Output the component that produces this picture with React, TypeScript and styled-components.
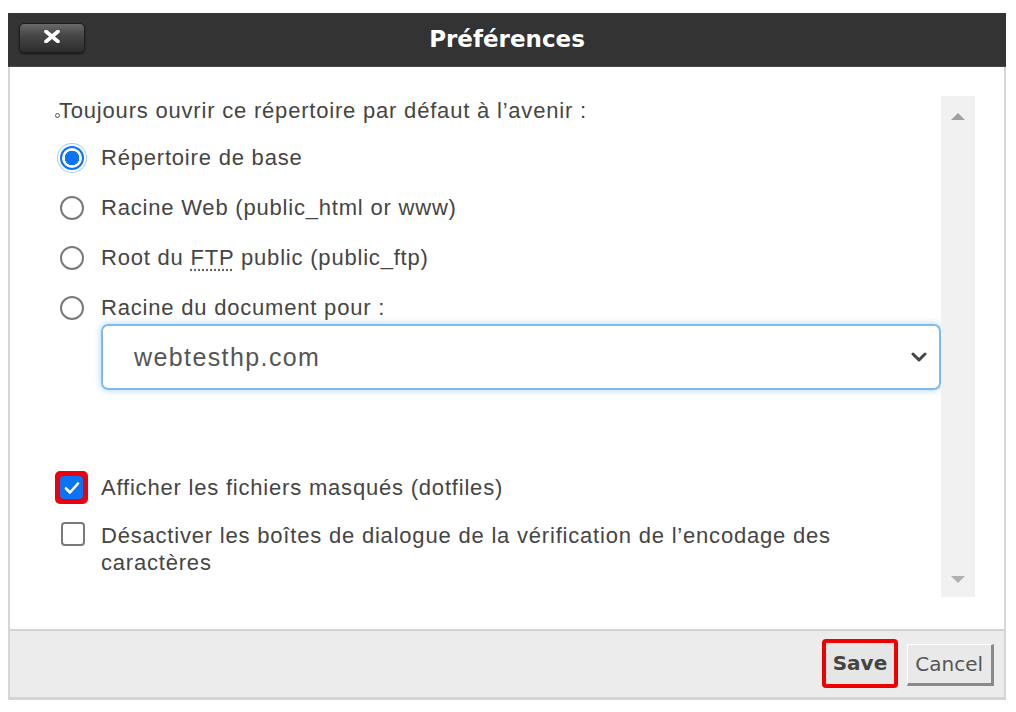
import React, { FC } from "react";
import styled, { createGlobalStyle, css } from "styled-components";

const GlobalStyle = createGlobalStyle`
  body {
    margin: 0;
    background: #fff;
    font-family: "Liberation Sans", Arial, sans-serif;
  }
`;

interface IOption {
  id: string;
  label: React.ReactNode;
  checked?: boolean;
}

const App: FC = () => {
  const folders: IOption[] = [
    { id: "home", label: "Répertoire de base", checked: true },
    { id: "web", label: "Racine Web (public_html or www)" },
    {
      id: "ftp",
      label: (
        <>
          Root du <Abbr title="File Transfer Protocol">FTP</Abbr> public (public_ftp)
        </>
      )
    },
    { id: "docroot", label: "Racine du document pour :" }
  ];

  return (
    <Page>
      <GlobalStyle />
      <Dialog>
        <Header>
          <CloseButton aria-label="close">
            <svg width="18" height="13" viewBox="0 0 18 13">
              <path d="M3 1.5 L15 11.5 M15 1.5 L3 11.5" stroke="#fff" strokeWidth="3.6" strokeLinecap="round" />
            </svg>
          </CloseButton>
          <Title>Préférences</Title>
          <span />
        </Header>
        <Body>
          <Content>
            <Heading>
              <Dot />
              Toujours ouvrir ce répertoire par défaut à l’avenir :
            </Heading>
            <RadioList>
              {folders.map(f => (
                <Row key={f.id}>
                  <Radio $checked={f.checked} />
                  <Label>{f.label}</Label>
                </Row>
              ))}
            </RadioList>
            <Select>
              <span>webtesthp.com</span>
              <svg width="16" height="10" viewBox="0 0 16 10">
                <path d="M2 2 L8 8 L14 2" fill="none" stroke="#444" strokeWidth="3" strokeLinecap="round" strokeLinejoin="round" />
              </svg>
            </Select>
            <CheckList>
              <Row>
                <Highlight>
                  <Checkbox $checked>
                    <svg width="16" height="14" viewBox="0 0 16 14">
                      <path d="M2 7.5 L6 11.5 L14 2.5" fill="none" stroke="#fff" strokeWidth="2.6" strokeLinecap="round" strokeLinejoin="round" />
                    </svg>
                  </Checkbox>
                </Highlight>
                <Label>Afficher les fichiers masqués (dotfiles)</Label>
              </Row>
              <Row $top>
                <Checkbox />
                <Label $wrap>
                  Désactiver les boîtes de dialogue de la vérification de l’encodage des caractères
                </Label>
              </Row>
            </CheckList>
          </Content>
          <ScrollRail>
            <Arrow />
            <Arrow $down />
          </ScrollRail>
        </Body>
        <Footer>
          <SaveFrame>
            <Button $primary>Save</Button>
          </SaveFrame>
          <Button>Cancel</Button>
        </Footer>
      </Dialog>
    </Page>
  );
};

const Page = styled.div`
  padding: 13px 10px 0 8px;
`;

const Dialog = styled.div`
  width: 998px;
`;

const Header = styled.div`
  height: 53px;
  background: #333;
  border-bottom: 1px solid #4a4a4a;
  display: grid;
  grid-template-columns: 1fr auto 1fr;
  align-items: center;
`;

const CloseButton = styled.button`
  justify-self: start;
  margin: -4px 0 0 11px;
  width: 66px;
  height: 30px;
  border: 1px solid #1e1e1e;
  border-radius: 5px;
  background: linear-gradient(#6a6a6a 0%, #4a4a4a 35%, #2c2c2c 100%);
  box-shadow: 0 1px 2px rgba(0, 0, 0, 0.6);
  display: flex;
  align-items: center;
  justify-content: center;
  padding: 0 0 2px;
`;

const Title = styled.div`
  color: #fff;
  font-family: "DejaVu Sans", sans-serif;
  font-weight: bold;
  font-size: 23px;
  margin-top: -1px;
`;

const Body = styled.div`
  height: 562px;
  display: flex;
  border-left: 2px solid #d6d6d6;
  border-right: 2px solid #d6d6d6;
  padding-right: 29px;
  box-sizing: border-box;
`;

const Content = styled.div`
  flex: 1;
  padding: 31px 0 0 45px;
  color: #454545;
  font-size: 22px;
  letter-spacing: 0.8px;
  line-height: 26px;
`;

const Heading = styled.div`
  display: flex;
  align-items: center;
`;

const Dot = styled.span`
  width: 3px;
  height: 3px;
  border: 1.5px solid #555;
  border-radius: 50%;
  margin: 8px -1px 0 0;
`;

const RadioList = styled.div`
  display: flex;
  flex-direction: column;
  gap: 24px;
  margin-top: 21px;
`;

const CheckList = styled.div`
  display: flex;
  flex-direction: column;
  gap: 18px;
  margin-top: 81px;
`;

const Row = styled.div<{ $top?: boolean }>`
  display: flex;
  align-items: ${p => (p.$top ? "flex-start" : "center")};
`;

const Label = styled.span<{ $wrap?: boolean }>`
  margin-left: 17px;
  ${p =>
    p.$wrap &&
    css`
      margin-left: 16px;
      max-width: 760px;
      line-height: 27px;
    `}
`;

const Abbr = styled.abbr`
  text-decoration: underline dotted #666;
  text-underline-offset: 4px;
`;

const Radio = styled.span<{ $checked?: boolean }>`
  width: 24px;
  height: 24px;
  margin-left: 5px;
  box-sizing: border-box;
  border-radius: 50%;
  flex-shrink: 0;
  border: 2px solid #7a7a7a;
  ${p =>
    p.$checked &&
    css`
      border-color: #0a74f5;
      background: radial-gradient(circle, #0a74f5 0 7px, #fff 7.5px);
      box-shadow: 0 0 0 2px #fff, 0 0 0 3px rgba(100, 170, 240, 0.6);
    `}
`;

const Select = styled.div`
  margin: 3px 0 0 46px;
  height: 66px;
  box-sizing: border-box;
  border: 2px solid #7fbaea;
  border-radius: 7px;
  box-shadow: 0 0 7px rgba(102, 175, 233, 0.55);
  display: flex;
  align-items: center;
  justify-content: space-between;
  padding: 0 12px 0 31px;
  font-size: 25px;
  letter-spacing: 1.4px;
  color: #555;
`;

const Highlight = styled.span`
  display: flex;
  margin: 0 -4px 0 0;
  padding: 2px;
  border: 3px solid #ea0010;
  border-radius: 5px;
  background: #ea0010;
`;

const Checkbox = styled.span<{ $checked?: boolean }>`
  width: 24px;
  height: 24px;
  box-sizing: border-box;
  flex-shrink: 0;
  margin-left: 6px;
  border-radius: 4px;
  border: 2px solid #7a7a7a;
  display: flex;
  align-items: center;
  justify-content: center;
  ${p =>
    p.$checked &&
    css`
      margin-left: 0;
      width: 23px;
      height: 23px;
      border: none;
      background: #0a74f5;
    `}
`;

const ScrollRail = styled.div`
  width: 34px;
  height: 501px;
  margin-top: 29px;
  background: #f1f1f1;
  display: flex;
  flex-direction: column;
  justify-content: space-between;
  align-items: center;
  padding: 17px 0 14px;
  box-sizing: border-box;
`;

const Arrow = styled.span<{ $down?: boolean }>`
  width: 0;
  height: 0;
  border-left: 7px solid transparent;
  border-right: 7px solid transparent;
  ${p =>
    p.$down
      ? css`
          border-top: 7px solid #b0b0b0;
        `
      : css`
          border-bottom: 7px solid #a0a0a0;
        `}
`;

const Footer = styled.div`
  height: 66px;
  background: #ececec;
  border: 2px solid #d6d6d6;
  border-top-color: #d3d3d3;
  border-bottom-width: 3px;
  display: flex;
  justify-content: flex-end;
  align-items: center;
  gap: 9px;
  padding-right: 10px;
`;

const SaveFrame = styled.div`
  display: flex;
  border: 4px solid #ee0000;
  border-radius: 4px;
  margin-top: -2px;
`;

const Button = styled.button<{ $primary?: boolean }>`
  font-family: "DejaVu Sans", Verdana, sans-serif;
  font-size: 20px;
  height: 42px;
  padding: 0 8px 0 7px;
  background: #e9e9e9;
  color: #555;
  border-style: solid;
  border-width: 1px 3px 3px 1px;
  border-color: #fff #8a8a8a #8a8a8a #fff;
  margin-top: 2px;
  ${p =>
    p.$primary &&
    css`
      height: 41px;
      margin-top: 0;
      font-weight: bold;
      color: #444;
      border: none;
      padding: 0 7px;
      background: #e6e6e6;
    `}
`;

export default App;
